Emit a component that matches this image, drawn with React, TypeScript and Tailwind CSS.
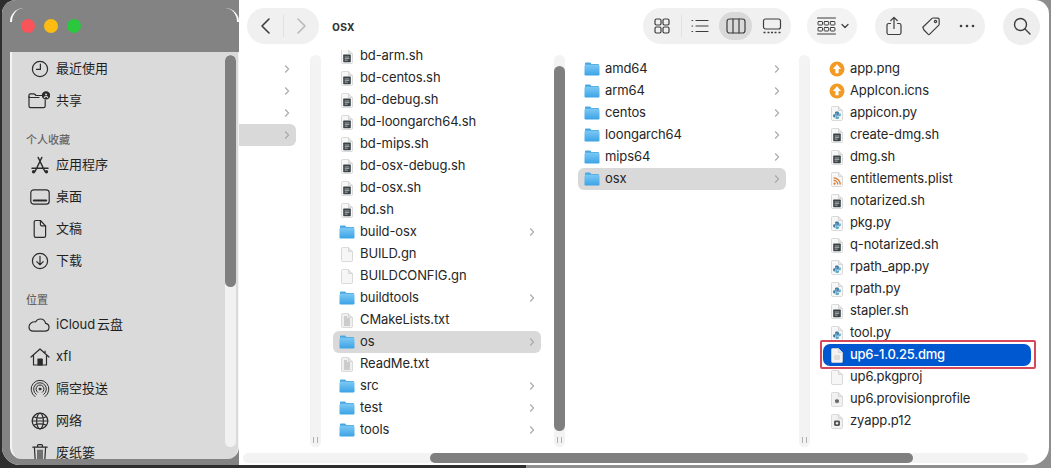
import React from "react";

const FONT = "font-['Inter','Noto_Sans_CJK_SC',sans-serif]";

function Folder() {
  return (
    <svg width="16" height="14" viewBox="0 0 16 14" className="shrink-0">
      <defs>
        <linearGradient id="fg" x1="0" y1="0" x2="0" y2="1">
          <stop offset="0" stopColor="#7cc8f4" />
          <stop offset="1" stopColor="#3ba3e6" />
        </linearGradient>
      </defs>
      <path d="M1 1.5C1 .9 1.4.5 2 .5h3.6c.5 0 .8.2 1.1.6l.6.8H14c.6 0 1 .4 1 1V4H1z" fill="#4aa9e4" />
      <rect x="0.5" y="2.8" width="15" height="10.7" rx="1.2" fill="url(#fg)" />
    </svg>
  );
}

function Sheet({ children, tone = "#f7f7f7" }: { children?: React.ReactNode; tone?: string }) {
  return (
    <svg width="12" height="15" viewBox="0 0 12 15" className="shrink-0">
      <path d="M1.5.5h6l4 4v9c0 .6-.4 1-1 1h-9c-.6 0-1-.4-1-1v-12c0-.6.4-1 1-1z" fill={tone} stroke="#d2d2d2" strokeWidth=".8" />
      <path d="M7.5.5v4h4" fill="#e6e6e6" stroke="#d2d2d2" strokeWidth=".8" />
      {children}
    </svg>
  );
}

function Script() {
  return (
    <Sheet>
      <rect x="2.2" y="5.6" width="7.6" height="7.6" rx=".6" fill="#3b4448" />
      <path d="M3.7 8h4.600M3.700 9.600h4.600M3.700 11.200h3" stroke="#cfd4d6" strokeWidth=".7" />
    </Sheet>
  );
}

function Py() {
  return (
    <Sheet>
      <path d="M6 5.5c-1.4 0-2 .5-2 1.3v1h2.2v.5H3.300c-.8 0-1.200.6-1.200 1.500s.4 1.600 1.200 1.600h.8v-1.100c0-.7.5-1.100 1.200-1.100h1.600c.6 0 1-.4 1-1V6.800c0-.8-.7-1.300-1.900-1.300z" fill="#3d7ea6" />
      <path d="M6 13c1.400 0 2-.5 2-1.300v-1H5.800v-.5h2.900c.8 0 1.200-.6 1.200-1.500s-.4-1.500-1.200-1.500h-.4v1c0 .7-.5 1.100-1.200 1.100H5.500c-.6 0-1 .4-1 1v1.400c0 .8.300 1.300 1.500 1.300z" fill="#5fa9c9" />
    </Sheet>
  );
}

function Rss() {
  return (
    <Sheet>
      <circle cx="3.600" cy="11.700" r="1.100" fill="#d9772a" />
      <path d="M2.600 8.400a4.200 4.200 0 0 1 4.200 4.200M2.600 5.900a6.700 6.700 0 0 1 6.700 6.700" fill="none" stroke="#d9772a" strokeWidth="1.300" />
    </Sheet>
  );
}

function Txt() {
  return (
    <Sheet tone="#efefef">
      <path d="M3 4h3M3 6h6M3 8h6M3 10h6M3 12h6" stroke="#a9a9a9" strokeWidth="1" />
    </Sheet>
  );
}

function Blank() {
  return <Sheet tone="#f6f6f6" />;
}

function Cert({ dark }: { dark?: boolean }) {
  return (
    <Sheet tone="#f1f1f1">
      {dark ? (
        <>
          <rect x="3" y="6.500" width="6" height="5.500" rx="1.400" fill="#555" />
          <circle cx="6" cy="9.200" r="1.200" fill="#e8e8e8" />
        </>
      ) : (
        <path d="M6 6.500l.8 1.300 1.500-.1-.6 1.400.6 1.400-1.500-.1-.8 1.300-.8-1.300-1.500.1.6-1.400-.6-1.400 1.500.1z" fill="#666" />
      )}
    </Sheet>
  );
}

function Orange() {
  return (
    <svg width="16" height="16" viewBox="0 0 16 16" className="shrink-0">
      <circle cx="8" cy="8" r="7.500" fill="#f39a24" />
      <path d="M8 3.200 3.900 7.900h2.500v4.400h3.200V7.900h2.500z" fill="#fff" />
    </svg>
  );
}

function Chevron() {
  return (
    <svg width="6" height="10" viewBox="0 0 6 10" className="shrink-0 ml-auto">
      <path d="M1.200 1.500 4.600 5 1.200 8.500" fill="none" stroke="#a8a8a8" strokeWidth="1.100" />
    </svg>
  );
}

type Row = { n: string; i: React.ReactNode; folder?: boolean; sel?: boolean };

function FileRow({ n, i, folder, sel }: Row) {
  return (
    <div className={`h-[22px] w-[208px] shrink-0 flex items-center pl-[6px] pr-[6px] rounded-[6px] ${sel ? "bg-[#d9d9d9]" : ""}`}>
      <span className="w-[16px] flex justify-center">{i}</span>
      <span className="ml-[5px] text-[13px] tracking-[-0.1px] text-[#262626] whitespace-nowrap">{n}</span>
      {folder ? <Chevron /> : null}
    </div>
  );
}

function Track({ thumbTop, thumbH }: { thumbTop: number; thumbH: number }) {
  return (
    <div className="relative w-[11px] h-[392px] mt-[4px] shrink-0 rounded-[6px] bg-[#f3f3f3] overflow-hidden">
      {thumbH > 0 ? <div className="bg-[#7f7f7f] rounded-[6px]" style={{ marginTop: thumbTop, height: thumbH }} /> : null}
      <div className="absolute left-[3px] bottom-[4px] w-[5px] h-[6px] border-x border-[#b0b0b0]" />
    </div>
  );
}

const Col2: Row[] = [
  { n: "bd-arm.sh", i: <Script /> },
  { n: "bd-centos.sh", i: <Script /> },
  { n: "bd-debug.sh", i: <Script /> },
  { n: "bd-loongarch64.sh", i: <Script /> },
  { n: "bd-mips.sh", i: <Script /> },
  { n: "bd-osx-debug.sh", i: <Script /> },
  { n: "bd-osx.sh", i: <Script /> },
  { n: "bd.sh", i: <Script /> },
  { n: "build-osx", i: <Folder />, folder: true },
  { n: "BUILD.gn", i: <Blank /> },
  { n: "BUILDCONFIG.gn", i: <Blank /> },
  { n: "buildtools", i: <Folder />, folder: true },
  { n: "CMakeLists.txt", i: <Txt /> },
  { n: "os", i: <Folder />, folder: true, sel: true },
  { n: "ReadMe.txt", i: <Txt /> },
  { n: "src", i: <Folder />, folder: true },
  { n: "test", i: <Folder />, folder: true },
  { n: "tools", i: <Folder />, folder: true },
];

const Col3: Row[] = [
  { n: "amd64", i: <Folder />, folder: true },
  { n: "arm64", i: <Folder />, folder: true },
  { n: "centos", i: <Folder />, folder: true },
  { n: "loongarch64", i: <Folder />, folder: true },
  { n: "mips64", i: <Folder />, folder: true },
  { n: "osx", i: <Folder />, folder: true, sel: true },
];

const Col4a: Row[] = [
  { n: "app.png", i: <Orange /> },
  { n: "AppIcon.icns", i: <Orange /> },
  { n: "appicon.py", i: <Py /> },
  { n: "create-dmg.sh", i: <Script /> },
  { n: "dmg.sh", i: <Script /> },
  { n: "entitlements.plist", i: <Rss /> },
  { n: "notarized.sh", i: <Script /> },
  { n: "pkg.py", i: <Py /> },
  { n: "q-notarized.sh", i: <Script /> },
  { n: "rpath_app.py", i: <Py /> },
  { n: "rpath.py", i: <Py /> },
  { n: "stapler.sh", i: <Script /> },
  { n: "tool.py", i: <Py /> },
];

const Col4b: Row[] = [
  { n: "up6.pkgproj", i: <Blank /> },
  { n: "up6.provisionprofile", i: <Cert /> },
  { n: "zyapp.p12", i: <Cert dark /> },
];

const ic = { fill: "none", stroke: "#2b2b2b", strokeWidth: 1.2, strokeLinecap: "round" as const, strokeLinejoin: "round" as const };

const SideIcons: Record<string, React.ReactNode> = {
  clock: (
    <svg width="20" height="20" viewBox="0 0 20 20" {...ic}>
      <circle cx="10" cy="10" r="7.600" />
      <path d="M10.400 5v5.400H6.600" />
    </svg>
  ),
  share: (
    <svg width="22" height="20" viewBox="0 0 22 20" {...ic}>
      <path d="M1 5.500V15c0 1 .6 1.600 1.600 1.600h13c1 0 1.600-.6 1.600-1.600V9" />
      <path d="M1 6.500V4.200c0-.8.5-1.300 1.300-1.300h3.400c.6 0 1 .2 1.400.6l.9 1H14M1 6.500h10" />
      <circle cx="18" cy="4.400" r="3.600" fill="#2b2b2b" />
      <circle cx="18" cy="3.400" r="1" fill="#dadada" stroke="none" />
      <path d="M16.300 6.400c.5-1.200 2.900-1.200 3.400 0" stroke="#dadada" />
    </svg>
  ),
  apps: (
    <svg width="20" height="20" viewBox="0 0 20 20" {...ic} strokeWidth={1.500}>
      <path d="M8.200 2.500 14.800 16.300M11.800 2.500 5.200 16.300M2 13.200h16" />
      <circle cx="3.600" cy="16.800" r="1" fill="#2b2b2b" />
      <circle cx="16.400" cy="16.800" r="1" fill="#2b2b2b" />
    </svg>
  ),
  desk: (
    <svg width="20" height="20" viewBox="0 0 20 20" {...ic}>
      <rect x=".8" y="2.800" width="18.400" height="14.400" rx="3" />
      <path d="M3.800 13.600h12.400" strokeWidth="2" />
    </svg>
  ),
  doc: (
    <svg width="20" height="20" viewBox="0 0 20 20" {...ic}>
      <path d="M4.200 3.200c0-1 .6-1.700 1.600-1.700h4.600l5.200 5.400v9.800c0 1-.6 1.700-1.600 1.700H5.800c-1 0-1.600-.7-1.600-1.700z" />
      <path d="M10.400 1.500v4c0 .9.5 1.400 1.400 1.400h3.800" />
    </svg>
  ),
  down: (
    <svg width="20" height="20" viewBox="0 0 20 20" {...ic}>
      <circle cx="10" cy="10" r="7.600" />
      <path d="M10 5.400v8.400M6.800 10.600l3.200 3.200 3.200-3.200" />
    </svg>
  ),
  cloud: (
    <svg width="22" height="20" viewBox="0 0 22 20" {...ic}>
      <path d="M5.500 16.200h11.300c2.500 0 4.200-1.700 4.200-3.900 0-2.100-1.500-3.600-3.400-3.900-.6-2.700-2.700-4.400-5.200-4.400-2.100 0-3.700 1-4.700 2.800C4.300 6.400 1 8.400 1 12c0 2.500 1.900 4.200 4.500 4.200z" />
    </svg>
  ),
  home: (
    <svg width="20" height="20" viewBox="0 0 20 20" {...ic}>
      <path d="M1 10 10 2l9 8M3.500 8.500V18h13V8.500M15 4v2.500" />
      <rect x="8" y="12" width="4.200" height="6" fill="#2b2b2b" />
    </svg>
  ),
  air: (
    <svg width="20" height="20" viewBox="0 0 20 20" {...ic} strokeWidth={1}>
      <path d="M5 17.600a8.900 8.900 0 1 1 10 0" />
      <path d="M6.300 15.400a6.400 6.400 0 1 1 7.400 0" />
      <path d="M7.700 13.300a4 4 0 1 1 4.600 0" />
      <circle cx="10" cy="10" r="1" fill="#2b2b2b" />
    </svg>
  ),
  net: (
    <svg width="20" height="20" viewBox="0 0 20 20" {...ic}>
      <circle cx="10" cy="10" r="7.800" />
      <ellipse cx="10" cy="10" rx="3.400" ry="7.800" />
      <path d="M2.200 10h15.600M3.400 5.800c4 1.600 9.200 1.600 13.200 0M3.400 14.200c4-1.600 9.200-1.600 13.200 0" />
    </svg>
  ),
  trash: (
    <svg width="20" height="20" viewBox="0 0 20 20" {...ic}>
      <path d="M2.800 4.200h14.400M7.500 4V2.600c0-.6.400-1 1-1h3c.6 0 1 .4 1 1V4M4.400 4.200l.8 13c0 .8.500 1.300 1.300 1.300h7c.8 0 1.300-.5 1.300-1.300l.8-13M8 7v9M10 7v9M12 7v9" />
    </svg>
  ),
};

function SideRow({ icon, label }: { icon: string; label: string }) {
  return (
    <div className="h-[32px] shrink-0 flex items-center">
      <span className="w-[46px] flex justify-end pr-[6px]">{SideIcons[icon]}</span>
      <span className="text-[13px] text-[#1f1f1f] whitespace-nowrap [word-spacing:-2px]">{label}</span>
    </div>
  );
}

function SideHead({ label }: { label: string }) {
  return (
    <div className="h-[32px] shrink-0 pt-[14px] pl-[16px] text-[11px] leading-[18px] font-medium text-[#666666]">{label}</div>
  );
}

const tb = { fill: "none", stroke: "#3d3d3d", strokeWidth: 1.200, strokeLinecap: "round" as const, strokeLinejoin: "round" as const };

function Toolbar() {
  return (
    <div className="h-[50px] shrink-0 flex items-center pt-[2px] pl-[8px] pr-[9px]">
      <div className="h-[36px] w-[72px] rounded-[18px] bg-[#f0f0f0] flex items-center">
        <span className="w-[36px] flex justify-center">
          <svg width="12" height="18" viewBox="0 0 12 18" {...tb} strokeWidth={1.600}><path d="M10 2 3 9l7 7" /></svg>
        </span>
        <span className="w-px h-[22px] bg-[#e0e0e0]" />
        <span className="w-[35px] flex justify-center">
          <svg width="12" height="18" viewBox="0 0 12 18" {...tb} stroke="#b9b9b9" strokeWidth={1.600}><path d="m2 2 7 7-7 7" /></svg>
        </span>
      </div>
      <span className="ml-[13px] mt-[2px] text-[13px] font-semibold text-[#333333]">osx</span>
      <div className="ml-auto h-[36px] w-[148px] rounded-[18px] bg-[#f0f0f0] flex items-center pl-[11px]">
        <svg width="16" height="16" viewBox="0 0 16 16" {...tb}>
          <rect x="1" y="1" width="6" height="6" rx="1.400" /><rect x="9" y="1" width="6" height="6" rx="1.400" />
          <rect x="1" y="9" width="6" height="6" rx="1.400" /><rect x="9" y="9" width="6" height="6" rx="1.400" />
        </svg>
        <span className="ml-[11px] w-px h-[22px] bg-[#e2e2e2]" />
        <svg className="ml-[9px]" width="18" height="14" viewBox="0 0 18 14" {...tb}>
          <path d="M5 1.500h12M5 7h12M5 12.500h12M1 1.500h.6M1 7h.6M1 12.500h.6" />
        </svg>
        <span className="ml-[10px] w-[33px] h-[28px] rounded-[14px] bg-[#d9d9d9] flex items-center justify-center">
          <svg width="20" height="16" viewBox="0 0 20 16" {...tb}>
            <rect x="1" y="1" width="18" height="14" rx="2.500" /><path d="M7 1v14M13 1v14" />
          </svg>
        </span>
        <svg className="ml-[10px]" width="20" height="16" viewBox="0 0 20 16" {...tb}>
          <rect x="1.500" y="1" width="17" height="10" rx="2" />
          <path d="M1.500 14.500h2M5.500 14.500h2M9 14.500h2M12.500 14.500h2M16.500 14.500h2" strokeWidth="1.500" strokeLinecap="butt" />
        </svg>
      </div>
      <div className="ml-[16px] h-[36px] w-[50px] rounded-[18px] bg-[#f3f3f3] flex items-center pl-[10px]">
        <svg width="19" height="18" viewBox="0 0 19 18" {...tb} strokeWidth={1}>
          <path d="M.5 1h18M.5 17h18" />
          <rect x="1" y="4.500" width="4.500" height="3.500" rx=".6" /><rect x="7.200" y="4.500" width="4.500" height="3.500" rx=".6" /><rect x="13.400" y="4.500" width="4.500" height="3.500" rx=".6" />
          <rect x="1" y="10.500" width="4.500" height="3.500" rx=".6" /><rect x="7.200" y="10.500" width="4.500" height="3.500" rx=".6" /><rect x="13.400" y="10.500" width="4.500" height="3.500" rx=".6" />
        </svg>
        <svg className="ml-[5px]" width="8" height="6" viewBox="0 0 8 6" {...tb}><path d="m1 1.500 3 3 3-3" /></svg>
      </div>
      <div className="ml-[18px] h-[36px] w-[110px] rounded-[18px] bg-[#f0f0f0] flex items-center pl-[11px]">
        <svg width="16" height="20" viewBox="0 0 16 20" {...tb}>
          <path d="M8 12.500V1.500M4.800 4.500 8 1.300l3.200 3.200M4.500 7.500H2.800C1.700 7.500 1 8.200 1 9.300v7.400c0 1.100.7 1.800 1.800 1.800h10.400c1.100 0 1.800-.7 1.800-1.800V9.300c0-1.100-.7-1.800-1.800-1.800h-1.700" />
        </svg>
        <svg className="ml-[19px]" width="20" height="20" viewBox="0 0 20 20" {...tb}>
          <path d="M1.800 11.200 11 2.400c.3-.3.700-.4 1.100-.4l4.800.1c.7 0 1.200.5 1.200 1.200l.1 4.700c0 .4-.1.800-.4 1.100l-9.100 9.100c-.5.500-1.200.5-1.700 0l-4-4.200z" />
          <circle cx="14.500" cy="5.500" r="1.100" />
        </svg>
        <svg className="ml-[18px]" width="16" height="4" viewBox="0 0 16 4"><circle cx="2" cy="2" r="1.300" fill="#3d3d3d" /><circle cx="8" cy="2" r="1.300" fill="#3d3d3d" /><circle cx="14" cy="2" r="1.300" fill="#3d3d3d" /></svg>
      </div>
      <div className="ml-[18px] h-[37px] w-[37px] rounded-full bg-[#eeeeee] flex items-center justify-center">
        <svg width="18" height="18" viewBox="0 0 18 18" {...tb} strokeWidth={1.400}>
          <circle cx="7.500" cy="7.500" r="6" /><path d="m12 12 5 5" />
        </svg>
      </div>
    </div>
  );
}

export default function App() {
  return (
    <div className={`${FONT} w-[1051px] h-[468px] bg-[linear-gradient(90deg,#2e2e2e_50%,#8e8e8e_50%)] overflow-hidden`}>
      <div className="w-[1047px] h-[465px] ml-[2px] rounded-[14px] rounded-bl-[18px] rounded-br-[18px] overflow-hidden flex bg-white">
        <aside className="w-[237px] shrink-0 bg-[#838383] flex flex-col">
          <div className="relative h-[52px] shrink-0 flex items-center gap-[9px] pl-[19px]">
            <span className="absolute left-[8px] top-[8px] w-[14px] h-[14px] rounded-tl-[14px] border-l-[2px] border-white" />
            <span className="absolute right-0 top-[8px] w-[14px] h-[14px] rounded-tr-[14px] border-r-[2px] border-white" />
            <span className="w-[14px] h-[14px] rounded-full bg-[#f9545a]" />
            <span className="w-[14px] h-[14px] rounded-full bg-[#fdbc12]" />
            <span className="w-[14px] h-[14px] rounded-full bg-[#2bc73f]" />
          </div>
          <div className="ml-[8px] h-[407px] shrink-0 bg-[#dadada] rounded-b-[12px] overflow-hidden flex border-l-[2px] border-l-[#f4f4f4] border-r border-r-[#f4f4f4]">
            <div className="flex-1 flex flex-col pt-[1px] -ml-[2px]">
              <SideRow icon="clock" label="最近使用" />
              <SideRow icon="share" label="共享" />
              <SideHead label="个人收藏" />
              <SideRow icon="apps" label="应用程序" />
              <SideRow icon="desk" label="桌面" />
              <SideRow icon="doc" label="文稿" />
              <SideRow icon="down" label="下载" />
              <SideHead label="位置" />
              <SideRow icon="cloud" label="iCloud 云盘" />
              <SideRow icon="home" label="xfl" />
              <SideRow icon="air" label="隔空投送" />
              <SideRow icon="net" label="网络" />
              <SideRow icon="trash" label="废纸篓" />
            </div>
            <div className="w-[11px] h-[392px] mt-[3px] mr-[2px] rounded-[6px] bg-[#f1f1f1] overflow-hidden">
              <div className="h-[232px] bg-[#7f7f7f] rounded-[6px]" />
            </div>
          </div>
        </aside>
        <main className="flex-1 min-w-0 flex flex-col">
          <Toolbar />
          <div className="h-[398px] shrink-0 flex overflow-hidden">
            <div className="w-[71px] shrink-0 flex flex-col pt-[8px]">
              {[0, 1, 2, 3].map((k) => (
                <div key={k} className={`h-[22px] w-[57px] shrink-0 flex items-center pr-[6px] rounded-r-[6px] ${k === 3 ? "bg-[#d9d9d9]" : ""}`}>
                  <Chevron />
                </div>
              ))}
            </div>
            <div className="-mt-[-1px]">
              <Track thumbTop={0} thumbH={0} />
            </div>
            <div className="w-[244px] shrink-0 flex">
              <div className="ml-[12px] -mt-[5px] flex flex-col">
                {Col2.map((r) => <FileRow key={r.n} {...r} />)}
              </div>
              <div className="ml-[13px] mt-[1px]">
                <Track thumbTop={11} thumbH={365} />
              </div>
            </div>
            <div className="w-[245px] shrink-0 flex">
              <div className="ml-[13px] pt-[8px] flex flex-col">
                {Col3.map((r) => <FileRow key={r.n} {...r} />)}
              </div>
              <div className="ml-[13px] mt-[1px]">
                <Track thumbTop={0} thumbH={0} />
              </div>
            </div>
            <div className="ml-[13px] pt-[8px] relative flex flex-col">
              {Col4a.map((r) => <FileRow key={r.n} {...r} />)}
              <div className="h-[22px] w-[208px] shrink-0 flex items-center pl-[6px] rounded-[7px] bg-[#0058d1] text-white">
                <span className="w-[16px] flex justify-center">
                  <Sheet tone="#f2f2f2"><rect x="3" y="7" width="6" height="5" rx="1" fill="#dcdcdc" /></Sheet>
                </span>
                <span className="ml-[5px] text-[13px] font-medium tracking-[-0.25px]">up6-1.0.25.dmg</span>
              </div>
              {Col4b.map((r) => <FileRow key={r.n} {...r} />)}
              <div className="absolute left-[-3px] top-[290px] w-[216px] h-[29px] border-2 border-[#d4485a] rounded-[2px]" />
            </div>
          </div>
          <div className="h-[10px] shrink-0 mt-[5px] ml-[4px] w-[785px] rounded-[5px] bg-[#f3f3f3] overflow-hidden">
            <div className="ml-[187px] w-[483px] h-full rounded-[5px] bg-[#7f7f7f]" />
          </div>
        </main>
      </div>
    </div>
  );
}
